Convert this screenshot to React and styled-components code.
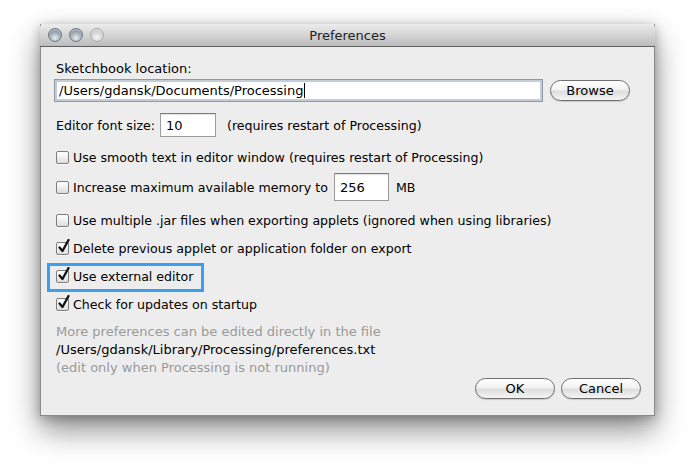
import React from 'react'
import styled, { createGlobalStyle } from 'styled-components'

const Global = createGlobalStyle`
  html, body {
    margin: 0;
    padding: 0;
    background: #ffffff;
  }
  body {
    font-family: "DejaVu Sans", "Liberation Sans", sans-serif;
    font-size: 13px;
    color: #000;
  }
`;

const Page = styled.div`
  width: 695px;
  height: 471px;
  padding: 24px 0 0 40px;
  box-sizing: border-box;
`;

const Window = styled.div`
  width: 615px;
  height: 392px;
  background: #ededed;
  border: 1px solid #8a8a8a;
  border-top: none;
  box-sizing: border-box;
  box-shadow: 0 14px 28px rgba(0, 0, 0, 0.45), 0 2px 10px rgba(0, 0, 0, 0.25);
  display: flex;
  flex-direction: column;
`;

const TitleBar = styled.div`
  height: 22px;
  flex: none;
  position: relative;
  display: flex;
  align-items: center;
  justify-content: center;
  background: linear-gradient(#ececec, #d4d4d4 50%, #bcbcbc);
  border-bottom: 1px solid #5e5e5e;
  border-radius: 4px 4px 0 0;
  margin: 0 -1px;
  font-size: 13px;
  color: #222;
`;

const Lights = styled.div`
  position: absolute;
  left: 8px;
  top: 4px;
  display: flex;
  gap: 7px;
`;

const Light = styled.span`
  width: 14px;
  height: 14px;
  border-radius: 50%;
  box-sizing: border-box;
  border: 1px solid ${p => (p.$off ? '#aaa' : '#6d7580')};
  background: ${p =>
    p.$off
      ? 'radial-gradient(circle at 50% 70%, #f4f4f4, #cfcfcf 60%, #c0c0c0)'
      : 'radial-gradient(circle at 50% 75%, #e8eef4, #9aa6b2 55%, #6f7b88)'};
  box-shadow: inset 0 1px 1px rgba(255, 255, 255, 0.6);
`;

const Body = styled.div`
  padding: 14px 13px 17px 15px;
  display: flex;
  flex-direction: column;
  flex: 1;
  font-size: 12.6px;
`;

const Label = styled.div`
  height: 16px;
  line-height: 16px;
  font-size: 13px;
`;

const Row = styled.div`
  display: flex;
  align-items: center;
  height: ${p => p.$h || 20}px;
  margin-top: ${p => p.$mt || 0}px;
  position: relative;
  align-self: flex-start;
  ${p =>
    p.$highlight &&
    `
    &::after {
      content: '';
      position: absolute;
      left: -9px;
      top: -3px;
      width: 157px;
      height: 29px;
      border: 3px solid #3a9ff0;
      box-sizing: border-box;
    }
  `}
`;

const PathRow = styled.div`
  display: flex;
  align-items: center;
  margin-top: 2px;
  margin-left: -2px;
  font-size: 13px;
`;

const PathField = styled.div`
  width: 489px;
  height: 23px;
  box-sizing: border-box;
  background: #fff;
  border: 1px solid #8f9aa6;
  box-shadow: inset 0 0 0 2px #c4cdd6;
  display: flex;
  align-items: center;
  padding-left: 4px;
`;

const Caret = styled.span`
  display: inline-block;
  width: 1px;
  height: 15px;
  background: #000;
  margin-left: 1px;
`;

const Field = styled.div`
  width: ${p => p.$w}px;
  height: ${p => p.$h}px;
  box-sizing: border-box;
  background: #fff;
  border: 1px solid #9c9c9c;
  border-top-color: #7a7a7a;
  box-shadow: inset 0 1px 1px rgba(0, 0, 0, 0.12);
  display: flex;
  align-items: center;
  padding-left: 5px;
  font-size: 13px;
  margin: 0 ${p => p.$mr || 0}px 0 ${p => p.$ml || 0}px;
`;

const Pill = styled.button`
  font-family: inherit;
  font-size: 13px;
  color: #000;
  width: ${p => p.$w}px;
  height: 21px;
  border-radius: 11px;
  border: 1px solid #6f6f6f;
  background: linear-gradient(#ffffff, #f2f2f2 45%, #dedede 55%, #f4f4f4);
  box-shadow: 0 1px 1px rgba(0, 0, 0, 0.15);
  padding: 0;
  margin-left: ${p => p.$ml || 0}px;
`;

const BoxWrap = styled.span`
  position: relative;
  width: 13px;
  height: 13px;
  flex: none;
  margin-right: 4px;
  box-sizing: border-box;
  border: 1px solid #7d7d7d;
  border-radius: 2px;
  background: linear-gradient(#ffffff, #f0f0f0 50%, #dcdcdc);
  box-shadow: 0 1px 0 rgba(255, 255, 255, 0.7);
`;

const Tick = styled.svg`
  position: absolute;
  left: 1px;
  top: -4px;
`;

const Checkbox = ({ checked }) => (
  <BoxWrap>
    {checked && (
      <Tick width="12" height="14" viewBox="0 0 12 14">
        <path d="M1.5 8.5 L4.5 12 L10.5 1" fill="none" stroke="#111" strokeWidth="2.3" strokeLinecap="round" strokeLinejoin="round" />
      </Tick>
    )}
  </BoxWrap>
);

const Note = styled.div`
  line-height: 18px;
  font-size: 13px;
  color: ${p => (p.$dark ? '#000' : '#9a9a9a')};
`;

const Notes = styled.div`
  margin-top: 9px;
`;

const Buttons = styled.div`
  display: flex;
  justify-content: flex-end;
  margin-top: 1px;
`;

const Check = ({ checked, children, mt, highlight }) => (
  <Row $mt={mt} $highlight={highlight}>
    <Checkbox checked={checked} />
    <span>{children}</span>
  </Row>
);

export default function App() {
  return (
    <Page>
      <Global />
      <Window>
        <TitleBar>
          <Lights>
            <Light />
            <Light />
            <Light $off />
          </Lights>
          Preferences
        </TitleBar>
        <Body>
          <Label>Sketchbook location:</Label>
          <PathRow>
            <PathField>
              /Users/gdansk/Documents/Processing<Caret />
            </PathField>
            <Pill $w={80} $ml={7}>Browse</Pill>
          </PathRow>
          <Row $h={24} $mt={11}>
            Editor font size:
            <Field $w={56} $h={24} $ml={5} $mr={11}>10</Field>
            (requires restart of Processing)
          </Row>
          <Check mt={10}>Use smooth text in editor window (requires restart of Processing)</Check>
          <Row $h={28} $mt={6}>
            <Checkbox />
            Increase maximum available memory to
            <Field $w={55} $h={28} $ml={6} $mr={7}>256</Field>
            MB
          </Row>
          <Check mt={9}>Use multiple .jar files when exporting applets (ignored when using libraries)</Check>
          <Check checked mt={8}>Delete previous applet or application folder on export</Check>
          <Check checked mt={8} highlight>Use external editor</Check>
          <Check checked mt={8}>Check for updates on startup</Check>
          <Notes>
            <Note>More preferences can be edited directly in the file</Note>
            <Note $dark>/Users/gdansk/Library/Processing/preferences.txt</Note>
            <Note>(edit only when Processing is not running)</Note>
          </Notes>
          <Buttons>
            <Pill $w={80}>OK</Pill>
            <Pill $w={80} $ml={6}>Cancel</Pill>
          </Buttons>
        </Body>
      </Window>
    </Page>
  )
}
